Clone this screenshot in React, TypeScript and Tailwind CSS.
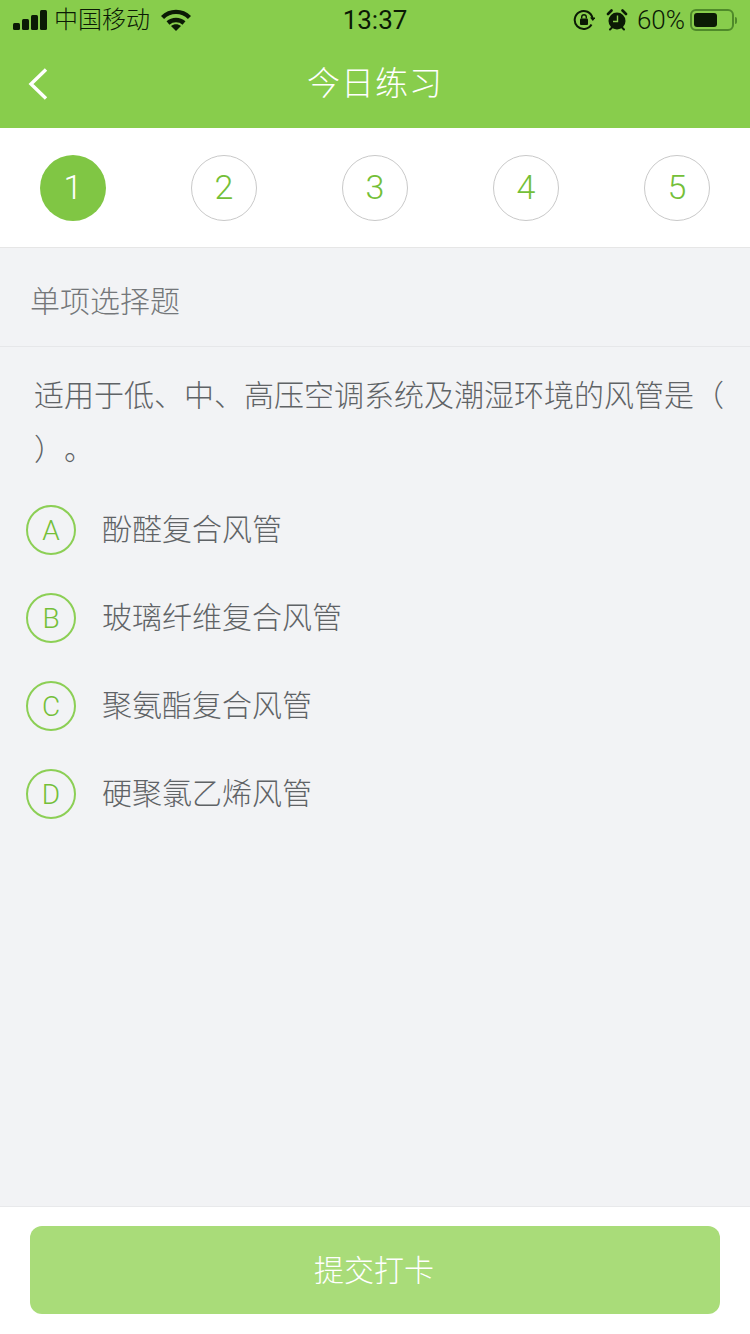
const font = { fontFamily: '"Liberation Sans", "Noto Sans CJK SC", sans-serif' };

function Signal() {
    return (
        <svg width="34" height="21" viewBox="0 0 34 21" fill="#0b1a05">
            <rect x="0" y="13" width="7" height="7" rx="1.5" />
            <rect x="9" y="9" width="7" height="11" rx="1.5" />
            <rect x="18" y="5" width="7" height="15" rx="1.5" />
            <rect x="27" y="0" width="7" height="20" rx="1.5" />
        </svg>
    );
}

function Wifi() {
    return (
        <svg width="30" height="22" viewBox="0 0 30 22" fill="none" stroke="#0b1a05" strokeWidth="4.4">
            <path d="M1.5 8.500C9 1 21 1 28.500 8.500" />
            <path d="M7 14c4.500-4 11.500-4 16 0" />
            <path d="M15 22l-5-5c3-2.500 7-2.500 10 0z" fill="#0b1a05" stroke="none" />
        </svg>
    );
}

function RotationLock() {
    return (
        <svg width="22" height="22" viewBox="0 0 22 22" fill="none">
            <path d="M18.500 15.500A9 9 0 1 1 19.500 9" stroke="#0b1a05" strokeWidth="2" />
            <path d="M17 8.500h5.500l-2.700 3.600z" fill="#0b1a05" />
            <rect x="7" y="9.500" width="8" height="6.500" rx="1" fill="#0b1a05" />
            <path d="M8.700 9.500V8a2.300 2.300 0 0 1 4.600 0v1.500" stroke="#0b1a05" strokeWidth="1.400" />
        </svg>
    );
}

function Alarm() {
    return (
        <svg width="22" height="22" viewBox="0 0 22 22">
            <circle cx="11" cy="12" r="8.500" fill="#0b1a05" />
            <path d="M2 5 5.500 1.500M20 5l-3.500-3.500" stroke="#0b1a05" strokeWidth="2.600" strokeLinecap="round" />
            <path d="M4 20.500l2-2M18 20.500l-2-2" stroke="#0b1a05" strokeWidth="2" strokeLinecap="round" />
            <path d="M11.500 6.500V12.500H7" fill="none" stroke="#88cd4c" strokeWidth="1.400" />
        </svg>
    );
}

function Battery() {
    return (
        <div className="flex items-center gap-[1px]">
            <div className="w-[44px] h-[22px] rounded-[6px] border-2 border-[#4f8a2a] p-[2px]">
                <div className="w-[23px] h-full rounded-[3px] bg-[#0b1a05]" />
            </div>
            <div className="w-[2px] h-[7px] rounded-r-sm bg-[#4f8a2a]" />
        </div>
    );
}

function StatusBar() {
    return (
        <div className="h-[40px] grid grid-cols-3 items-center text-[#0b1a05]">
            <div className="flex items-center pl-[13px]">
                <Signal />
                <span className="ml-[7px] text-[24px] leading-[34px] font-light whitespace-nowrap">中国移动</span>
                <span className="ml-[11px]"><Wifi /></span>
            </div>
            <div className="text-center text-[26px] leading-[34px] font-['Roboto'] font-normal">13:37</div>
            <div className="flex items-center justify-end pr-[13px]">
                <RotationLock />
                <span className="ml-[11px]"><Alarm /></span>
                <span className="ml-[9px] text-[26px] leading-[34px] font-['Roboto'] font-light whitespace-nowrap">60%</span>
                <span className="ml-[5px]"><Battery /></span>
            </div>
        </div>
    );
}

function NavBar() {
    return (
        <div className="h-[88px] relative flex items-center justify-center bg-[#88cd4c]">
            <svg className="absolute left-[27px] top-[28px]" width="22" height="32" viewBox="0 0 22 32" fill="none">
                <path d="M19 1.500 4 16l15 14.500" stroke="#fff" strokeWidth="3.400" />
            </svg>
            <span className="text-[33px] leading-[44px] font-light text-white tracking-[1px]">今日练习</span>
        </div>
    );
}

function Steps() {
    return (
        <div className="h-[120px] px-[40px] flex items-center justify-between bg-white border-b border-[#e6e6e6]">
            {[1, 2, 3, 4, 5].map((n) => (
                <div
                    key={n}
                    className={
                        n === 1
                            ? "w-[66px] h-[66px] rounded-full flex items-center justify-center text-[34px] font-['Roboto'] font-light bg-[#80c644] text-white"
                            : "w-[66px] h-[66px] rounded-full flex items-center justify-center text-[34px] font-['Roboto'] font-light border border-[#c9c9c9] text-[#74bf38]"
                    }
                >
                    {n}
                </div>
            ))}
        </div>
    );
}

function Option({ letter, text }: { letter: string; text: string }) {
    return (
        <div className="h-[88px] flex items-center pl-[26px]">
            <div className="w-[50px] h-[50px] pt-[2px] rounded-full border-2 border-[#8ccf55] flex items-center justify-center text-[28px] font-['Roboto'] font-light text-[#74bf38]">
                {letter}
            </div>
            <span className="ml-[26px] mb-[2px] text-[30px] font-light text-[#5f6366]">{text}</span>
        </div>
    );
}

export default function App() {
    return (
        <div className="h-[1334px] w-[750px] flex flex-col bg-[#f2f3f5] overflow-hidden" style={font}>
            <div className="bg-[#88cd4c]">
                <StatusBar />
                <NavBar />
            </div>
            <Steps />
            <div className="h-[99px] pt-[8px] pl-[30px] flex items-center border-b border-[#e6e7e9] text-[30px] font-light text-[#74777a]">
                单项选择题
            </div>
            <div className="flex-1">
                <p className="pt-[22px] pl-[34px] pr-[20px] text-[30px] leading-[54px] font-light text-[#5f6366] [text-spacing-trim:space-all]">
                    适用于低、中、高压空调系统及潮湿环境的风管是（ ）。
                </p>
                <div className="mt-[9px]">
                    <Option letter="A" text="酚醛复合风管" />
                    <Option letter="B" text="玻璃纤维复合风管" />
                    <Option letter="C" text="聚氨酯复合风管" />
                    <Option letter="D" text="硬聚氯乙烯风管" />
                </div>
            </div>
            <div className="h-[128px] pt-[19px] px-[30px] bg-white border-t border-[#e8e9eb]">
                <div className="h-[88px] pr-[2px] rounded-[12px] bg-[#a9dc79] flex items-center justify-center text-[30px] font-light text-white">
                    提交打卡
                </div>
            </div>
        </div>
    );
}
